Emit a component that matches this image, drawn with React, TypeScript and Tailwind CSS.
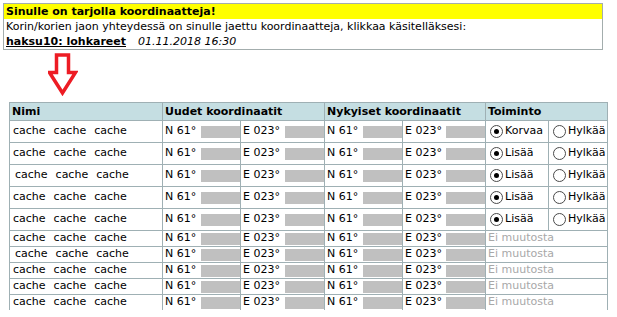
import React from "react";

const font = { fontFamily: '"DejaVu Sans", Verdana, sans-serif' };

const Radio = ({ checked, label }: { checked?: boolean; label: string }) => (
  <div className="flex items-center gap-[2px] pl-[4px]">
    <span className="flex h-[13px] w-[13px] items-center justify-center rounded-full border border-[#4a4a4a] bg-white">
      {checked && <span className="h-[5px] w-[5px] rounded-full bg-black" />}
    </span>
    <span>{label}</span>
  </div>
);

const Coord = ({ prefix }: { prefix: string }) => (
  <div className="flex h-full items-center justify-between pl-[2px]">
    <span>{prefix}</span>
    <span className="h-[12px] w-[39px] bg-[#c0c0c0]" />
  </div>
);

const cell = "border-l border-t border-[#9fb0b4]";

const rows = [
  { action: "Korvaa" },
  { action: "Lisää" },
  { action: "Lisää", shift: true },
  { action: "Lisää" },
  { action: "Lisää" },
  {},
  { shift: true },
  {},
  {},
  {},
];

export default function App() {
  return (
    <div className="h-[317px] w-[617px] overflow-hidden bg-white text-[11px] text-black" style={font}>
      {/* notice box */}
      <div className="ml-[3px] mt-[3px] w-[600px] border border-[#a3adad]">
        <div className="h-[15px] bg-[#ffff00] pl-[2px] font-bold leading-[15px]">Sinulle on tarjolla koordinaatteja!</div>
        <div className="h-[15px] pl-[2px] leading-[15px]">
          Korin/korien jaon yhteydessä on sinulle jaettu koordinaatteja, klikkaa käsitelläksesi:
        </div>
        <div className="h-[15px] pl-[2px] leading-[15px]">
          <span className="font-bold underline">haksu10: lohkareet</span>
          <span className="ml-[12px] italic">01.11.2018 16:30</span>
        </div>
      </div>

      {/* arrow */}
      <div className="h-[49px]">
        <svg width="30" height="43" viewBox="0 0 30 43" className="ml-[48px] mt-[3px]">
          <polygon
            points="8.5,2 20.5,2 20.5,19.5 27.5,19.5 14.5,40 1.5,19.5 8.5,19.5"
            fill="white"
            stroke="#ed1c24"
            strokeWidth="3.5"
            strokeLinejoin="miter"
          />
        </svg>
      </div>

      {/* table */}
      <div className="ml-[9px] grid w-[599px] grid-cols-[153px_78px_84px_78px_83px_63px_60px]">
        <div className={`${cell} h-[18px] bg-[#c5dee2] pl-[2px] font-bold leading-[17px]`}>Nimi</div>
        <div className={`${cell} col-span-2 bg-[#c5dee2] pl-[2px] font-bold leading-[17px]`}>Uudet koordinaatit</div>
        <div className={`${cell} col-span-2 bg-[#c5dee2] pl-[2px] font-bold leading-[17px]`}>Nykyiset koordinaatit</div>
        <div className={`${cell} col-span-2 border-r bg-[#c5dee2] pl-[2px] font-bold leading-[17px]`}>Toiminto</div>

        {rows.map((r, i) => {
          const h = r.action ? "h-[22px]" : "h-[16px]";
          return (
            <React.Fragment key={i}>
              <div className={`${cell} ${h} flex items-center gap-[8px] ${r.shift ? "pl-[5px]" : "pl-[3px]"}`}>
                <span>cache</span>
                <span>cache</span>
                <span>cache</span>
              </div>
              <div className={`${cell} ${h}`}><Coord prefix="N 61°" /></div>
              <div className={`${cell} ${h}`}><Coord prefix="E 023°" /></div>
              <div className={`${cell} ${h}`}><Coord prefix="N 61°" /></div>
              <div className={`${cell} ${h}`}><Coord prefix="E 023°" /></div>
              {r.action ? (
                <>
                  <div className={`${cell} ${h} flex items-center`}><Radio checked label={r.action} /></div>
                  <div className={`${cell} ${h} flex items-center border-r`}><Radio label="Hylkää" /></div>
                </>
              ) : (
                <div className={`${cell} ${h} col-span-2 flex items-center border-r pl-[2px] text-[#a8a8a8]`}>Ei muutosta</div>
              )}
            </React.Fragment>
          );
        })}
      </div>
    </div>
  );
}
